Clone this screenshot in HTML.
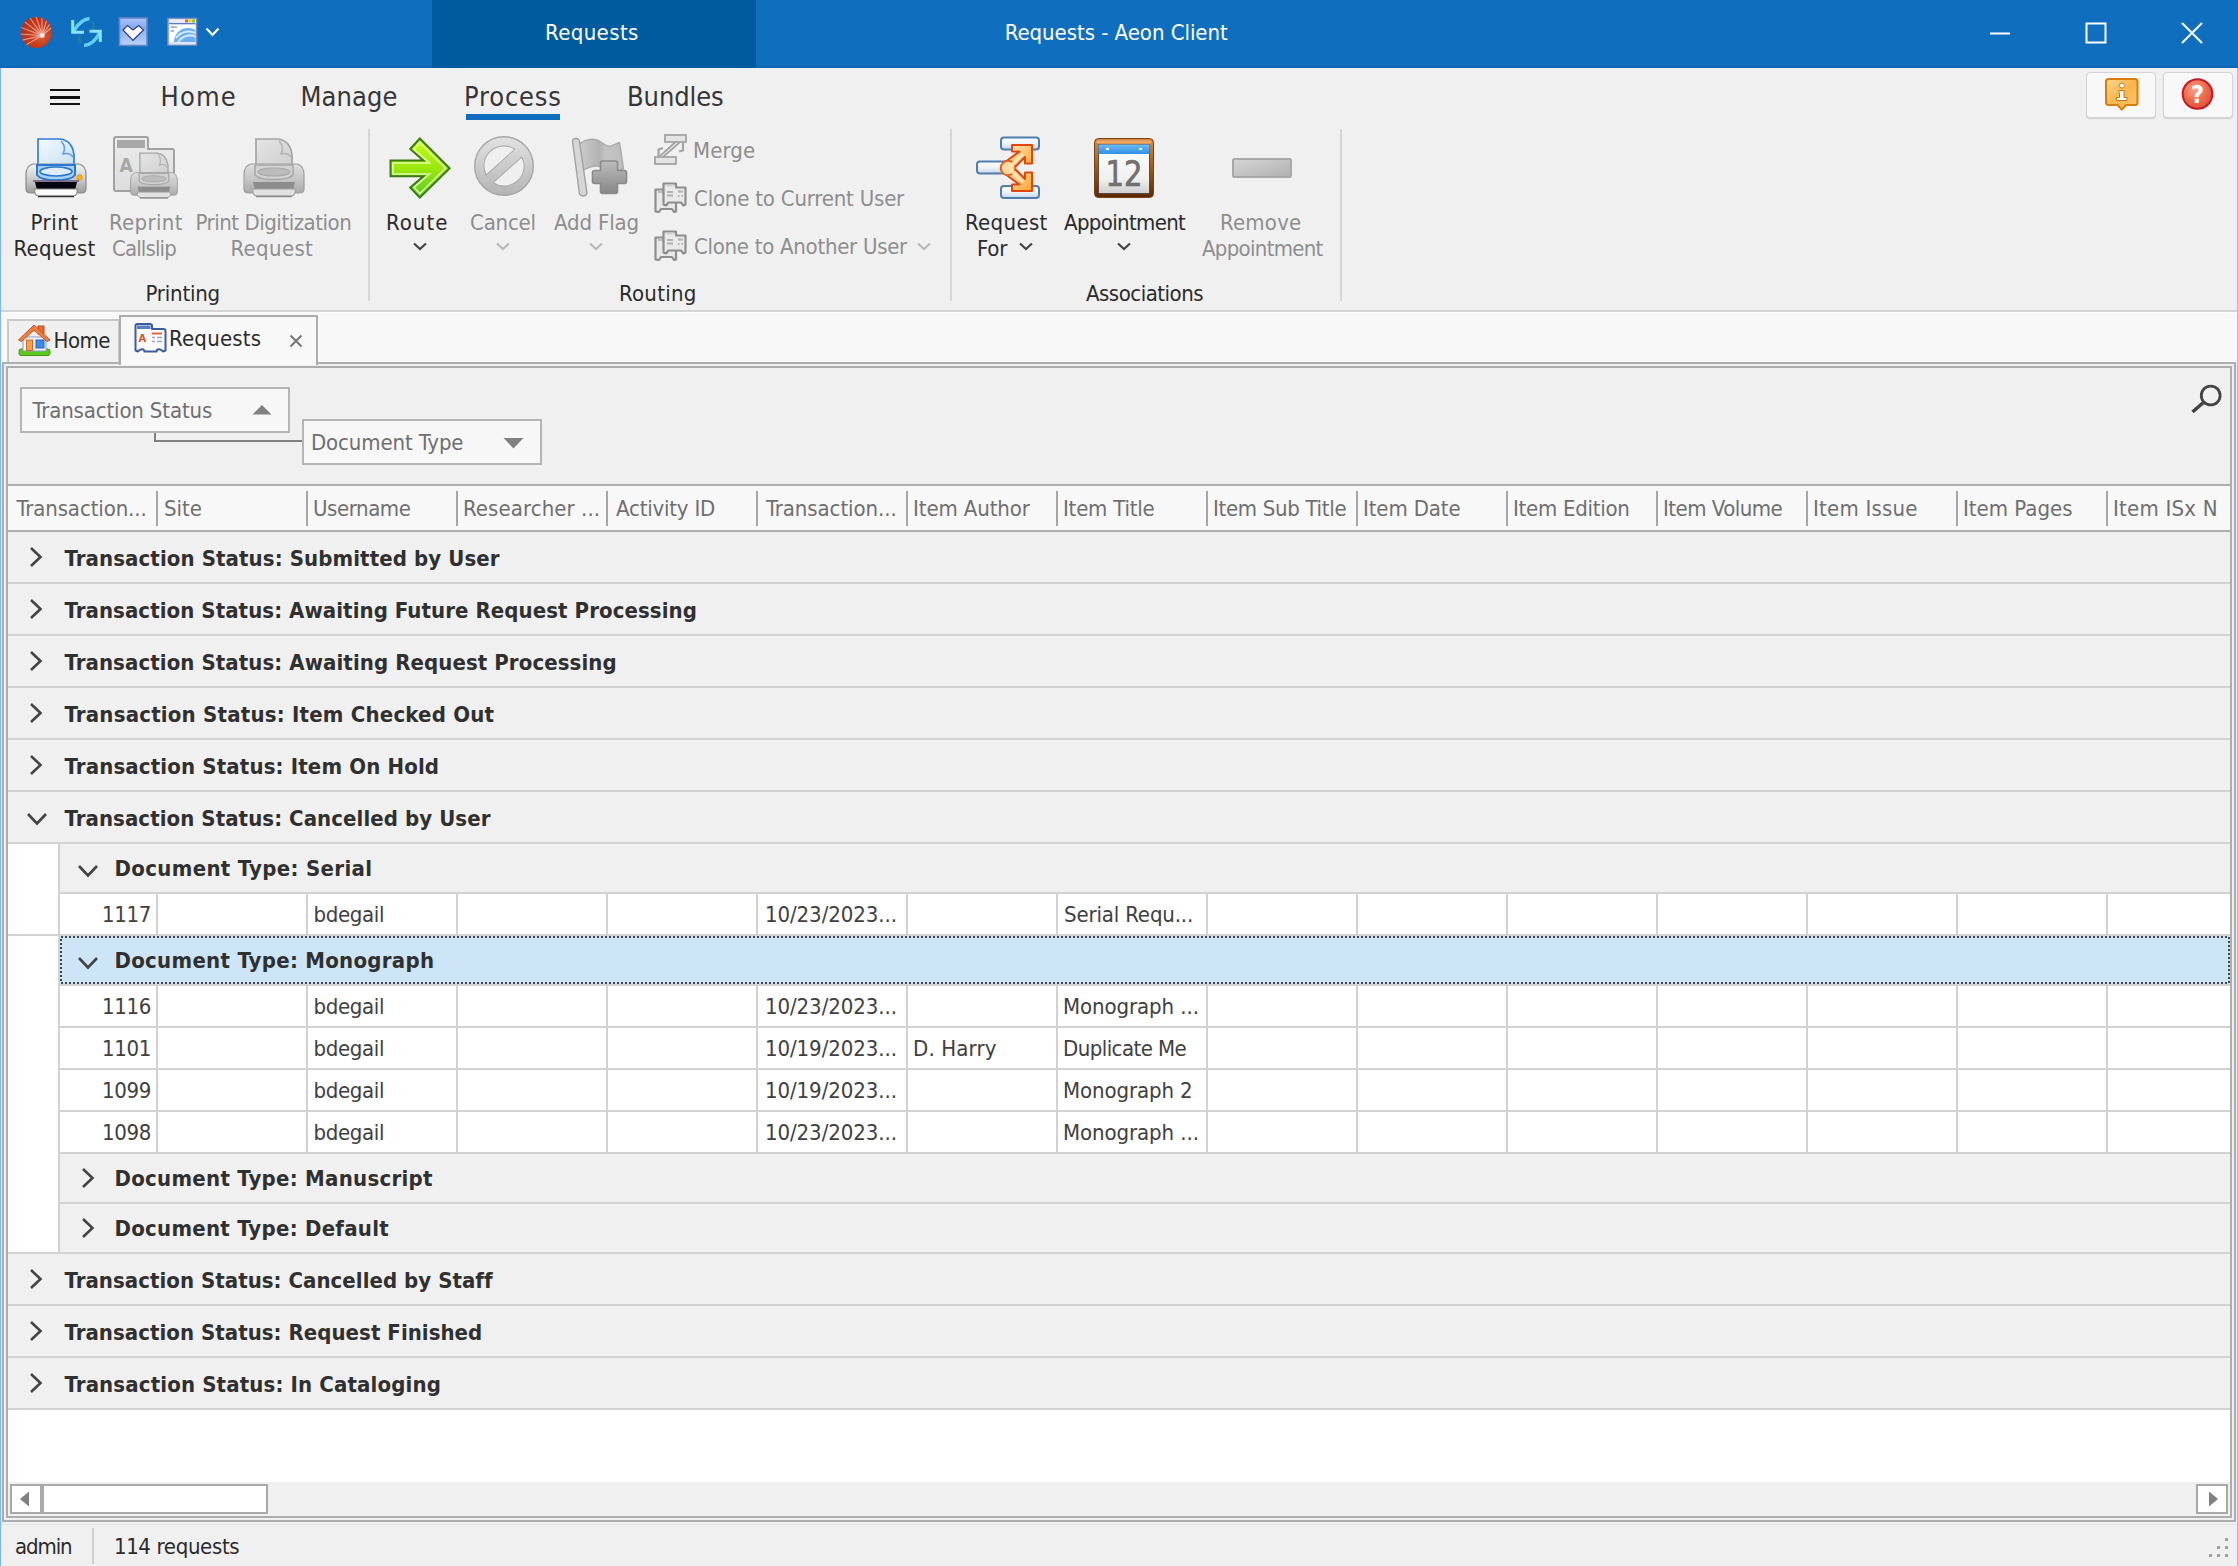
<!DOCTYPE html>
<html lang="en"><head><meta charset="utf-8"><title>Requests - Aeon Client</title>
<style>
html,body{margin:0;padding:0;overflow:hidden;}
body{width:2238px;height:1566px;position:relative;overflow:hidden;background:#f0f0f0;font-family:"DejaVu Sans Condensed","Liberation Sans",sans-serif;}
.b{position:absolute;box-sizing:border-box;}
.t{position:absolute;white-space:nowrap;line-height:1;}
</style></head>
<body>
<div class="b " style="left:0px;top:0px;width:2238px;height:68px;background:#106ebe;"></div>
<div class="b " style="left:432px;top:0px;width:324px;height:68px;background:#005a9e;"></div>
<div class="b " style="left:0px;top:66px;width:2238px;height:2px;background:#0f66b3;"></div>
<div class="b " style="left:432px;top:66px;width:324px;height:2px;background:#005a9e;"></div>
<div class="t" style="left:545px;top:22px;font-size:22px;color:#fff;letter-spacing:0.39px;">Requests</div>
<div class="t" style="left:1004.7px;top:22px;font-size:22px;color:#fff;letter-spacing:-0.04px;">Requests - Aeon Client</div>
<svg class="b" style="left:1980px;top:14px" width="240" height="40" viewBox="0 0 240 40"><g stroke="#fff" stroke-width="2" fill="none"><path d="M10 19.5H30"/><rect x="106.5" y="9.5" width="19" height="19"/><path d="M202 9L222 29M222 9L202 29"/></g></svg>
<div class="b " style="left:0px;top:68px;width:1px;height:1498px;background:#86b6e6;"></div>
<div class="b " style="left:2237px;top:68px;width:1px;height:1498px;background:#9cc2ea;"></div>
<div class="b " style="left:50px;top:89px;width:30px;height:2px;background:#111;"></div>
<div class="b " style="left:50px;top:96px;width:30px;height:3px;background:#111;"></div>
<div class="b " style="left:50px;top:103px;width:30px;height:2px;background:#111;"></div>
<div class="t" style="left:160.5px;top:83px;font-size:27px;color:#363636;letter-spacing:1.17px;">Home</div>
<div class="t" style="left:300.5px;top:83px;font-size:27px;color:#363636;letter-spacing:0.10px;">Manage</div>
<div class="t" style="left:464px;top:83px;font-size:27px;color:#363636;letter-spacing:0.83px;">Process</div>
<div class="t" style="left:627px;top:83px;font-size:27px;color:#363636;letter-spacing:-0.08px;">Bundles</div>
<div class="b " style="left:466px;top:114px;width:94px;height:6px;background:#106ebe;"></div>
<div class="b " style="left:368px;top:129px;width:2px;height:172px;background:#d6d6d6;"></div>
<div class="b " style="left:950px;top:129px;width:2px;height:172px;background:#d6d6d6;"></div>
<div class="b " style="left:1340px;top:129px;width:2px;height:172px;background:#d6d6d6;"></div>
<div class="t" style="left:30.5px;top:212px;font-size:22px;color:#2b2b2b;letter-spacing:0.50px;">Print</div>
<div class="t" style="left:13.5px;top:238px;font-size:22px;color:#2b2b2b;letter-spacing:0.25px;">Request</div>
<div class="t" style="left:109px;top:212px;font-size:22px;color:#8e8e8e;letter-spacing:0.33px;">Reprint</div>
<div class="t" style="left:112px;top:238px;font-size:22px;color:#8e8e8e;letter-spacing:-0.86px;">Callslip</div>
<div class="t" style="left:195.5px;top:212px;font-size:22px;color:#8e8e8e;letter-spacing:-0.47px;">Print Digitization</div>
<div class="t" style="left:230.5px;top:238px;font-size:22px;color:#8e8e8e;letter-spacing:0.33px;">Request</div>
<div class="t" style="left:386px;top:212px;font-size:22px;color:#2b2b2b;letter-spacing:1.00px;">Route</div>
<svg class="b" style="left:412px;top:241px" width="16" height="11" viewBox="0 0 16 11"><path d="M2 2.5L8.0 8L14 2.5" fill="none" stroke="#444" stroke-width="2.2"/></svg>
<div class="t" style="left:470px;top:212px;font-size:22px;color:#8e8e8e;letter-spacing:-0.20px;">Cancel</div>
<svg class="b" style="left:495px;top:241px" width="16" height="11" viewBox="0 0 16 11"><path d="M2 2.5L8.0 8L14 2.5" fill="none" stroke="#b9b9b9" stroke-width="2.2"/></svg>
<div class="t" style="left:554px;top:212px;font-size:22px;color:#8e8e8e;letter-spacing:-0.14px;">Add Flag</div>
<svg class="b" style="left:588px;top:241px" width="16" height="11" viewBox="0 0 16 11"><path d="M2 2.5L8.0 8L14 2.5" fill="none" stroke="#b9b9b9" stroke-width="2.2"/></svg>
<div class="t" style="left:693px;top:140px;font-size:22px;color:#8e8e8e;letter-spacing:0.12px;">Merge</div>
<div class="t" style="left:694px;top:188px;font-size:22px;color:#8e8e8e;letter-spacing:-0.20px;">Clone to Current User</div>
<div class="t" style="left:694px;top:236px;font-size:22px;color:#8e8e8e;letter-spacing:-0.28px;">Clone to Another User</div>
<svg class="b" style="left:916px;top:241px" width="16" height="11" viewBox="0 0 16 11"><path d="M2 2.5L8.0 8L14 2.5" fill="none" stroke="#b9b9b9" stroke-width="2.2"/></svg>
<div class="t" style="left:965px;top:212px;font-size:22px;color:#2b2b2b;letter-spacing:0.33px;">Request</div>
<div class="t" style="left:977px;top:238px;font-size:22px;color:#2b2b2b;letter-spacing:-0.25px;">For</div>
<svg class="b" style="left:1018px;top:241px" width="16" height="11" viewBox="0 0 16 11"><path d="M2 2.5L8.0 8L14 2.5" fill="none" stroke="#444" stroke-width="2.2"/></svg>
<div class="t" style="left:1064px;top:212px;font-size:22px;color:#2b2b2b;letter-spacing:-0.65px;">Appointment</div>
<svg class="b" style="left:1116px;top:241px" width="16" height="11" viewBox="0 0 16 11"><path d="M2 2.5L8.0 8L14 2.5" fill="none" stroke="#444" stroke-width="2.2"/></svg>
<div class="t" style="left:1220px;top:212px;font-size:22px;color:#8e8e8e;letter-spacing:0.20px;">Remove</div>
<div class="t" style="left:1202px;top:238px;font-size:22px;color:#8e8e8e;letter-spacing:-0.70px;">Appointment</div>
<div class="t" style="left:145.5px;top:283px;font-size:22px;color:#2b2b2b;letter-spacing:-0.21px;">Printing</div>
<div class="t" style="left:619px;top:283px;font-size:22px;color:#2b2b2b;letter-spacing:0.25px;">Routing</div>
<div class="t" style="left:1086px;top:283px;font-size:22px;color:#2b2b2b;letter-spacing:-0.50px;">Associations</div>
<div class="b " style="left:2086px;top:72px;width:70px;height:46px;background:#f8f8f8;border:1px solid #d4d4d4;border-radius:4px;box-shadow:0 1px 1px #cfcfcf;"></div>
<div class="b " style="left:2163px;top:72px;width:70px;height:46px;background:#f8f8f8;border:1px solid #d4d4d4;border-radius:4px;box-shadow:0 1px 1px #cfcfcf;"></div>
<div class="b " style="left:1px;top:310px;width:2236px;height:2px;background:#d4d4d4;"></div>
<div class="b " style="left:1px;top:312px;width:2236px;height:50px;background:#f8f8f8;"></div>
<div class="b " style="left:1px;top:312px;width:2236px;height:1px;background:#fcfcfc;"></div>
<div class="b " style="left:1px;top:361px;width:2236px;height:1px;background:#fdfdfd;"></div>
<div class="b " style="left:7px;top:319px;width:113px;height:44px;background:#f0f0f0;border:2px solid #c9c9c9;border-bottom:none;"></div>
<div class="t" style="left:53.5px;top:330px;font-size:22px;color:#2b2b2b;letter-spacing:-0.50px;">Home</div>
<div class="b " style="left:2px;top:362px;width:2234px;height:1160px;background:#f0f0f0;border:2px solid #adadad;"></div>
<div class="b " style="left:119px;top:315px;width:199px;height:50px;background:#f8f8f8;border:2px solid #adadad;border-bottom:none;"></div>
<div class="b " style="left:121px;top:362px;width:195px;height:2px;background:#f8f8f8;"></div>
<div class="t" style="left:169px;top:328px;font-size:22px;color:#2b2b2b;letter-spacing:0.21px;">Requests</div>
<svg class="b" style="left:288px;top:333px" width="16" height="16" viewBox="0 0 16 16"><path d="M2.5 2.5L13.5 13.5M13.5 2.5L2.5 13.5" stroke="#777" stroke-width="2" fill="none"/></svg>
<div class="b " style="left:6px;top:366px;width:2226px;height:1152px;background:#fff;border:2px solid #adadad;"></div>
<div class="b " style="left:8px;top:368px;width:2222px;height:116px;background:#f0f0f0;"></div>
<div class="b " style="left:20px;top:387px;width:270px;height:46px;background:#f7f7f7;border:2px solid #b5b5b5;"></div>
<div class="t" style="left:32.5px;top:400px;font-size:22px;color:#6f6f6f;letter-spacing:-0.15px;">Transaction Status</div>
<svg class="b" style="left:252px;top:404px" width="20" height="12" viewBox="0 0 20 12"><path d="M10 1L19.5 10.5H0.5Z" fill="#808080"/></svg>
<div class="b " style="left:154px;top:433px;width:2px;height:9px;background:#808080;"></div>
<div class="b " style="left:154px;top:440px;width:149px;height:2px;background:#808080;"></div>
<div class="b " style="left:302px;top:419px;width:240px;height:46px;background:#f7f7f7;border:2px solid #b5b5b5;"></div>
<div class="t" style="left:311px;top:432px;font-size:22px;color:#6f6f6f;letter-spacing:-0.12px;">Document Type</div>
<svg class="b" style="left:503px;top:437px" width="21" height="12" viewBox="0 0 21 12"><path d="M0.5 1H20.5L10.5 11.5Z" fill="#808080"/></svg>
<svg class="b" style="left:2186px;top:380px" width="40" height="40" viewBox="0 0 40 40"><circle cx="24.700" cy="15.500" r="9.400" fill="none" stroke="#444" stroke-width="2.800"/><path d="M18 22L6.500 32" stroke="#444" stroke-width="3.600"/></svg>
<div class="b " style="left:8px;top:484px;width:2222px;height:2px;background:#adadad;"></div>
<div class="b " style="left:8px;top:486px;width:2222px;height:44px;background:#f8f8f8;"></div>
<div class="b " style="left:8px;top:530px;width:2222px;height:2px;background:#adadad;"></div>
<div class="t" style="left:16.5px;top:498px;font-size:22px;color:#6f6f6f;letter-spacing:-0.12px;">Transaction...</div>
<div class="t" style="left:164px;top:498px;font-size:22px;color:#6f6f6f;">Site</div>
<div class="t" style="left:313px;top:498px;font-size:22px;color:#6f6f6f;letter-spacing:-0.43px;">Username</div>
<div class="t" style="left:463px;top:498px;font-size:22px;color:#6f6f6f;letter-spacing:0.08px;">Researcher ...</div>
<div class="t" style="left:616px;top:498px;font-size:22px;color:#6f6f6f;letter-spacing:-0.20px;">Activity ID</div>
<div class="t" style="left:766px;top:498px;font-size:22px;color:#6f6f6f;letter-spacing:-0.08px;">Transaction...</div>
<div class="t" style="left:913px;top:498px;font-size:22px;color:#6f6f6f;letter-spacing:-0.10px;">Item Author</div>
<div class="t" style="left:1063px;top:498px;font-size:22px;color:#6f6f6f;letter-spacing:-0.22px;">Item Title</div>
<div class="t" style="left:1213px;top:498px;font-size:22px;color:#6f6f6f;letter-spacing:-0.31px;">Item Sub Title</div>
<div class="t" style="left:1363px;top:498px;font-size:22px;color:#6f6f6f;letter-spacing:-0.12px;">Item Date</div>
<div class="t" style="left:1513px;top:498px;font-size:22px;color:#6f6f6f;letter-spacing:-0.27px;">Item Edition</div>
<div class="t" style="left:1663px;top:498px;font-size:22px;color:#6f6f6f;letter-spacing:-0.50px;">Item Volume</div>
<div class="t" style="left:1813px;top:498px;font-size:22px;color:#6f6f6f;letter-spacing:0.22px;">Item Issue</div>
<div class="t" style="left:1963px;top:498px;font-size:22px;color:#6f6f6f;">Item Pages</div>
<div class="t" style="left:2113px;top:498px;font-size:22px;color:#6f6f6f;letter-spacing:0.22px;">Item ISx N</div>
<div class="b " style="left:156px;top:491px;width:2px;height:35px;background:#a6a6a6;"></div>
<div class="b " style="left:306px;top:491px;width:2px;height:35px;background:#a6a6a6;"></div>
<div class="b " style="left:456px;top:491px;width:2px;height:35px;background:#a6a6a6;"></div>
<div class="b " style="left:606px;top:491px;width:2px;height:35px;background:#a6a6a6;"></div>
<div class="b " style="left:756px;top:491px;width:2px;height:35px;background:#a6a6a6;"></div>
<div class="b " style="left:906px;top:491px;width:2px;height:35px;background:#a6a6a6;"></div>
<div class="b " style="left:1056px;top:491px;width:2px;height:35px;background:#a6a6a6;"></div>
<div class="b " style="left:1206px;top:491px;width:2px;height:35px;background:#a6a6a6;"></div>
<div class="b " style="left:1356px;top:491px;width:2px;height:35px;background:#a6a6a6;"></div>
<div class="b " style="left:1506px;top:491px;width:2px;height:35px;background:#a6a6a6;"></div>
<div class="b " style="left:1656px;top:491px;width:2px;height:35px;background:#a6a6a6;"></div>
<div class="b " style="left:1806px;top:491px;width:2px;height:35px;background:#a6a6a6;"></div>
<div class="b " style="left:1956px;top:491px;width:2px;height:35px;background:#a6a6a6;"></div>
<div class="b " style="left:2106px;top:491px;width:2px;height:35px;background:#a6a6a6;"></div>
<div class="b " style="left:8px;top:532px;width:2222px;height:50px;background:#f0f0f0;"></div>
<div class="b " style="left:8px;top:582px;width:2222px;height:2px;background:#d2d2d2;"></div>
<svg class="b" style="left:28px;top:545px" width="17" height="24" viewBox="0 0 17 24"><path d="M3 3L12.5 12L3 21" fill="none" stroke="#444" stroke-width="2.6"/></svg>
<div class="t" style="left:64.5px;top:548px;font-size:22px;color:#303030;font-weight:bold;letter-spacing:0.10px;">Transaction Status: Submitted by User</div>
<div class="b " style="left:8px;top:584px;width:2222px;height:50px;background:#f0f0f0;"></div>
<div class="b " style="left:8px;top:634px;width:2222px;height:2px;background:#d2d2d2;"></div>
<svg class="b" style="left:28px;top:597px" width="17" height="24" viewBox="0 0 17 24"><path d="M3 3L12.5 12L3 21" fill="none" stroke="#444" stroke-width="2.6"/></svg>
<div class="t" style="left:64.5px;top:600px;font-size:22px;color:#303030;font-weight:bold;letter-spacing:0.07px;">Transaction Status: Awaiting Future Request Processing</div>
<div class="b " style="left:8px;top:636px;width:2222px;height:50px;background:#f0f0f0;"></div>
<div class="b " style="left:8px;top:686px;width:2222px;height:2px;background:#d2d2d2;"></div>
<svg class="b" style="left:28px;top:649px" width="17" height="24" viewBox="0 0 17 24"><path d="M3 3L12.5 12L3 21" fill="none" stroke="#444" stroke-width="2.6"/></svg>
<div class="t" style="left:64.5px;top:652px;font-size:22px;color:#303030;font-weight:bold;letter-spacing:0.08px;">Transaction Status: Awaiting Request Processing</div>
<div class="b " style="left:8px;top:688px;width:2222px;height:50px;background:#f0f0f0;"></div>
<div class="b " style="left:8px;top:738px;width:2222px;height:2px;background:#d2d2d2;"></div>
<svg class="b" style="left:28px;top:701px" width="17" height="24" viewBox="0 0 17 24"><path d="M3 3L12.5 12L3 21" fill="none" stroke="#444" stroke-width="2.6"/></svg>
<div class="t" style="left:64.5px;top:704px;font-size:22px;color:#303030;font-weight:bold;letter-spacing:0.21px;">Transaction Status: Item Checked Out</div>
<div class="b " style="left:8px;top:740px;width:2222px;height:50px;background:#f0f0f0;"></div>
<div class="b " style="left:8px;top:790px;width:2222px;height:2px;background:#d2d2d2;"></div>
<svg class="b" style="left:28px;top:753px" width="17" height="24" viewBox="0 0 17 24"><path d="M3 3L12.5 12L3 21" fill="none" stroke="#444" stroke-width="2.6"/></svg>
<div class="t" style="left:64.5px;top:756px;font-size:22px;color:#303030;font-weight:bold;letter-spacing:0.15px;">Transaction Status: Item On Hold</div>
<div class="b " style="left:8px;top:792px;width:2222px;height:50px;background:#f0f0f0;"></div>
<div class="b " style="left:8px;top:842px;width:2222px;height:2px;background:#d2d2d2;"></div>
<svg class="b" style="left:25px;top:811px" width="24" height="17" viewBox="0 0 24 17"><path d="M3 3L12 12.5L21 3" fill="none" stroke="#444" stroke-width="2.6"/></svg>
<div class="t" style="left:64.5px;top:808px;font-size:22px;color:#303030;font-weight:bold;letter-spacing:0.07px;">Transaction Status: Cancelled by User</div>
<div class="b " style="left:58px;top:844px;width:2px;height:50px;background:#d2d2d2;"></div>
<div class="b " style="left:60px;top:844px;width:2170px;height:48px;background:#f0f0f0;"></div>
<div class="b " style="left:58px;top:892px;width:2172px;height:2px;background:#d2d2d2;"></div>
<svg class="b" style="left:76px;top:863px" width="24" height="17" viewBox="0 0 24 17"><path d="M3 3L12 12.5L21 3" fill="none" stroke="#444" stroke-width="2.6"/></svg>
<div class="t" style="left:114.5px;top:858px;font-size:22px;color:#303030;font-weight:bold;letter-spacing:0.33px;">Document Type: Serial</div>
<div class="b " style="left:58px;top:894px;width:2px;height:42px;background:#d2d2d2;"></div>
<div class="b " style="left:8px;top:934px;width:2222px;height:2px;background:#d2d2d2;"></div>
<div class="b " style="left:156px;top:894px;width:2px;height:40px;background:#d2d2d2;"></div>
<div class="b " style="left:306px;top:894px;width:2px;height:40px;background:#d2d2d2;"></div>
<div class="b " style="left:456px;top:894px;width:2px;height:40px;background:#d2d2d2;"></div>
<div class="b " style="left:606px;top:894px;width:2px;height:40px;background:#d2d2d2;"></div>
<div class="b " style="left:756px;top:894px;width:2px;height:40px;background:#d2d2d2;"></div>
<div class="b " style="left:906px;top:894px;width:2px;height:40px;background:#d2d2d2;"></div>
<div class="b " style="left:1056px;top:894px;width:2px;height:40px;background:#d2d2d2;"></div>
<div class="b " style="left:1206px;top:894px;width:2px;height:40px;background:#d2d2d2;"></div>
<div class="b " style="left:1356px;top:894px;width:2px;height:40px;background:#d2d2d2;"></div>
<div class="b " style="left:1506px;top:894px;width:2px;height:40px;background:#d2d2d2;"></div>
<div class="b " style="left:1656px;top:894px;width:2px;height:40px;background:#d2d2d2;"></div>
<div class="b " style="left:1806px;top:894px;width:2px;height:40px;background:#d2d2d2;"></div>
<div class="b " style="left:1956px;top:894px;width:2px;height:40px;background:#d2d2d2;"></div>
<div class="b " style="left:2106px;top:894px;width:2px;height:40px;background:#d2d2d2;"></div>
<div class="t" style="left:102px;top:904px;font-size:22px;color:#404040;letter-spacing:-0.33px;">1117</div>
<div class="t" style="left:313.5px;top:904px;font-size:22px;color:#404040;letter-spacing:-0.33px;">bdegail</div>
<div class="t" style="left:765px;top:904px;font-size:22px;color:#404040;letter-spacing:-0.08px;">10/23/2023...</div>
<div class="t" style="left:1064px;top:904px;font-size:22px;color:#404040;letter-spacing:-0.15px;">Serial Requ...</div>
<div class="b " style="left:58px;top:936px;width:2px;height:50px;background:#d2d2d2;"></div>
<div class="b " style="left:60px;top:936px;width:2170px;height:48px;background:#cde6f7;"></div>
<div class="b " style="left:58px;top:984px;width:2172px;height:2px;background:#d2d2d2;"></div>
<svg class="b" style="left:60px;top:936px" width="2170" height="48"><rect x="1" y="1" width="2168" height="46" fill="none" stroke="#444" stroke-width="2" stroke-dasharray="2 2"/></svg>
<svg class="b" style="left:76px;top:955px" width="24" height="17" viewBox="0 0 24 17"><path d="M3 3L12 12.5L21 3" fill="none" stroke="#444" stroke-width="2.6"/></svg>
<div class="t" style="left:114.5px;top:950px;font-size:22px;color:#303030;font-weight:bold;letter-spacing:0.28px;">Document Type: Monograph</div>
<div class="b " style="left:58px;top:986px;width:2px;height:42px;background:#d2d2d2;"></div>
<div class="b " style="left:58px;top:1026px;width:2172px;height:2px;background:#d2d2d2;"></div>
<div class="b " style="left:156px;top:986px;width:2px;height:40px;background:#d2d2d2;"></div>
<div class="b " style="left:306px;top:986px;width:2px;height:40px;background:#d2d2d2;"></div>
<div class="b " style="left:456px;top:986px;width:2px;height:40px;background:#d2d2d2;"></div>
<div class="b " style="left:606px;top:986px;width:2px;height:40px;background:#d2d2d2;"></div>
<div class="b " style="left:756px;top:986px;width:2px;height:40px;background:#d2d2d2;"></div>
<div class="b " style="left:906px;top:986px;width:2px;height:40px;background:#d2d2d2;"></div>
<div class="b " style="left:1056px;top:986px;width:2px;height:40px;background:#d2d2d2;"></div>
<div class="b " style="left:1206px;top:986px;width:2px;height:40px;background:#d2d2d2;"></div>
<div class="b " style="left:1356px;top:986px;width:2px;height:40px;background:#d2d2d2;"></div>
<div class="b " style="left:1506px;top:986px;width:2px;height:40px;background:#d2d2d2;"></div>
<div class="b " style="left:1656px;top:986px;width:2px;height:40px;background:#d2d2d2;"></div>
<div class="b " style="left:1806px;top:986px;width:2px;height:40px;background:#d2d2d2;"></div>
<div class="b " style="left:1956px;top:986px;width:2px;height:40px;background:#d2d2d2;"></div>
<div class="b " style="left:2106px;top:986px;width:2px;height:40px;background:#d2d2d2;"></div>
<div class="t" style="left:102px;top:996px;font-size:22px;color:#404040;letter-spacing:-0.33px;">1116</div>
<div class="t" style="left:313.5px;top:996px;font-size:22px;color:#404040;letter-spacing:-0.33px;">bdegail</div>
<div class="t" style="left:765px;top:996px;font-size:22px;color:#404040;letter-spacing:-0.08px;">10/23/2023...</div>
<div class="t" style="left:1063px;top:996px;font-size:22px;color:#404040;letter-spacing:-0.08px;">Monograph ...</div>
<div class="b " style="left:58px;top:1028px;width:2px;height:42px;background:#d2d2d2;"></div>
<div class="b " style="left:58px;top:1068px;width:2172px;height:2px;background:#d2d2d2;"></div>
<div class="b " style="left:156px;top:1028px;width:2px;height:40px;background:#d2d2d2;"></div>
<div class="b " style="left:306px;top:1028px;width:2px;height:40px;background:#d2d2d2;"></div>
<div class="b " style="left:456px;top:1028px;width:2px;height:40px;background:#d2d2d2;"></div>
<div class="b " style="left:606px;top:1028px;width:2px;height:40px;background:#d2d2d2;"></div>
<div class="b " style="left:756px;top:1028px;width:2px;height:40px;background:#d2d2d2;"></div>
<div class="b " style="left:906px;top:1028px;width:2px;height:40px;background:#d2d2d2;"></div>
<div class="b " style="left:1056px;top:1028px;width:2px;height:40px;background:#d2d2d2;"></div>
<div class="b " style="left:1206px;top:1028px;width:2px;height:40px;background:#d2d2d2;"></div>
<div class="b " style="left:1356px;top:1028px;width:2px;height:40px;background:#d2d2d2;"></div>
<div class="b " style="left:1506px;top:1028px;width:2px;height:40px;background:#d2d2d2;"></div>
<div class="b " style="left:1656px;top:1028px;width:2px;height:40px;background:#d2d2d2;"></div>
<div class="b " style="left:1806px;top:1028px;width:2px;height:40px;background:#d2d2d2;"></div>
<div class="b " style="left:1956px;top:1028px;width:2px;height:40px;background:#d2d2d2;"></div>
<div class="b " style="left:2106px;top:1028px;width:2px;height:40px;background:#d2d2d2;"></div>
<div class="t" style="left:102px;top:1038px;font-size:22px;color:#404040;letter-spacing:-0.33px;">1101</div>
<div class="t" style="left:313.5px;top:1038px;font-size:22px;color:#404040;letter-spacing:-0.33px;">bdegail</div>
<div class="t" style="left:765px;top:1038px;font-size:22px;color:#404040;letter-spacing:-0.08px;">10/19/2023...</div>
<div class="t" style="left:913px;top:1038px;font-size:22px;color:#404040;letter-spacing:0.14px;">D. Harry</div>
<div class="t" style="left:1063px;top:1038px;font-size:22px;color:#404040;letter-spacing:-0.55px;">Duplicate Me</div>
<div class="b " style="left:58px;top:1070px;width:2px;height:42px;background:#d2d2d2;"></div>
<div class="b " style="left:58px;top:1110px;width:2172px;height:2px;background:#d2d2d2;"></div>
<div class="b " style="left:156px;top:1070px;width:2px;height:40px;background:#d2d2d2;"></div>
<div class="b " style="left:306px;top:1070px;width:2px;height:40px;background:#d2d2d2;"></div>
<div class="b " style="left:456px;top:1070px;width:2px;height:40px;background:#d2d2d2;"></div>
<div class="b " style="left:606px;top:1070px;width:2px;height:40px;background:#d2d2d2;"></div>
<div class="b " style="left:756px;top:1070px;width:2px;height:40px;background:#d2d2d2;"></div>
<div class="b " style="left:906px;top:1070px;width:2px;height:40px;background:#d2d2d2;"></div>
<div class="b " style="left:1056px;top:1070px;width:2px;height:40px;background:#d2d2d2;"></div>
<div class="b " style="left:1206px;top:1070px;width:2px;height:40px;background:#d2d2d2;"></div>
<div class="b " style="left:1356px;top:1070px;width:2px;height:40px;background:#d2d2d2;"></div>
<div class="b " style="left:1506px;top:1070px;width:2px;height:40px;background:#d2d2d2;"></div>
<div class="b " style="left:1656px;top:1070px;width:2px;height:40px;background:#d2d2d2;"></div>
<div class="b " style="left:1806px;top:1070px;width:2px;height:40px;background:#d2d2d2;"></div>
<div class="b " style="left:1956px;top:1070px;width:2px;height:40px;background:#d2d2d2;"></div>
<div class="b " style="left:2106px;top:1070px;width:2px;height:40px;background:#d2d2d2;"></div>
<div class="t" style="left:102px;top:1080px;font-size:22px;color:#404040;letter-spacing:-0.33px;">1099</div>
<div class="t" style="left:313.5px;top:1080px;font-size:22px;color:#404040;letter-spacing:-0.33px;">bdegail</div>
<div class="t" style="left:765px;top:1080px;font-size:22px;color:#404040;letter-spacing:-0.08px;">10/19/2023...</div>
<div class="t" style="left:1063px;top:1080px;font-size:22px;color:#404040;letter-spacing:-0.10px;">Monograph 2</div>
<div class="b " style="left:58px;top:1112px;width:2px;height:42px;background:#d2d2d2;"></div>
<div class="b " style="left:58px;top:1152px;width:2172px;height:2px;background:#d2d2d2;"></div>
<div class="b " style="left:156px;top:1112px;width:2px;height:40px;background:#d2d2d2;"></div>
<div class="b " style="left:306px;top:1112px;width:2px;height:40px;background:#d2d2d2;"></div>
<div class="b " style="left:456px;top:1112px;width:2px;height:40px;background:#d2d2d2;"></div>
<div class="b " style="left:606px;top:1112px;width:2px;height:40px;background:#d2d2d2;"></div>
<div class="b " style="left:756px;top:1112px;width:2px;height:40px;background:#d2d2d2;"></div>
<div class="b " style="left:906px;top:1112px;width:2px;height:40px;background:#d2d2d2;"></div>
<div class="b " style="left:1056px;top:1112px;width:2px;height:40px;background:#d2d2d2;"></div>
<div class="b " style="left:1206px;top:1112px;width:2px;height:40px;background:#d2d2d2;"></div>
<div class="b " style="left:1356px;top:1112px;width:2px;height:40px;background:#d2d2d2;"></div>
<div class="b " style="left:1506px;top:1112px;width:2px;height:40px;background:#d2d2d2;"></div>
<div class="b " style="left:1656px;top:1112px;width:2px;height:40px;background:#d2d2d2;"></div>
<div class="b " style="left:1806px;top:1112px;width:2px;height:40px;background:#d2d2d2;"></div>
<div class="b " style="left:1956px;top:1112px;width:2px;height:40px;background:#d2d2d2;"></div>
<div class="b " style="left:2106px;top:1112px;width:2px;height:40px;background:#d2d2d2;"></div>
<div class="t" style="left:102px;top:1122px;font-size:22px;color:#404040;letter-spacing:-0.33px;">1098</div>
<div class="t" style="left:313.5px;top:1122px;font-size:22px;color:#404040;letter-spacing:-0.33px;">bdegail</div>
<div class="t" style="left:765px;top:1122px;font-size:22px;color:#404040;letter-spacing:-0.08px;">10/23/2023...</div>
<div class="t" style="left:1063px;top:1122px;font-size:22px;color:#404040;letter-spacing:-0.08px;">Monograph ...</div>
<div class="b " style="left:58px;top:1154px;width:2px;height:50px;background:#d2d2d2;"></div>
<div class="b " style="left:60px;top:1154px;width:2170px;height:48px;background:#f0f0f0;"></div>
<div class="b " style="left:58px;top:1202px;width:2172px;height:2px;background:#d2d2d2;"></div>
<svg class="b" style="left:80px;top:1166px" width="17" height="24" viewBox="0 0 17 24"><path d="M3 3L12.5 12L3 21" fill="none" stroke="#444" stroke-width="2.6"/></svg>
<div class="t" style="left:114.5px;top:1168px;font-size:22px;color:#303030;font-weight:bold;letter-spacing:0.27px;">Document Type: Manuscript</div>
<div class="b " style="left:58px;top:1204px;width:2px;height:50px;background:#d2d2d2;"></div>
<div class="b " style="left:60px;top:1204px;width:2170px;height:48px;background:#f0f0f0;"></div>
<div class="b " style="left:8px;top:1252px;width:2222px;height:2px;background:#d2d2d2;"></div>
<svg class="b" style="left:80px;top:1216px" width="17" height="24" viewBox="0 0 17 24"><path d="M3 3L12.5 12L3 21" fill="none" stroke="#444" stroke-width="2.6"/></svg>
<div class="t" style="left:114.5px;top:1218px;font-size:22px;color:#303030;font-weight:bold;letter-spacing:0.26px;">Document Type: Default</div>
<div class="b " style="left:8px;top:1254px;width:2222px;height:50px;background:#f0f0f0;"></div>
<div class="b " style="left:8px;top:1304px;width:2222px;height:2px;background:#d2d2d2;"></div>
<svg class="b" style="left:28px;top:1267px" width="17" height="24" viewBox="0 0 17 24"><path d="M3 3L12.5 12L3 21" fill="none" stroke="#444" stroke-width="2.6"/></svg>
<div class="t" style="left:64.5px;top:1270px;font-size:22px;color:#303030;font-weight:bold;letter-spacing:0.04px;">Transaction Status: Cancelled by Staff</div>
<div class="b " style="left:8px;top:1306px;width:2222px;height:50px;background:#f0f0f0;"></div>
<div class="b " style="left:8px;top:1356px;width:2222px;height:2px;background:#d2d2d2;"></div>
<svg class="b" style="left:28px;top:1319px" width="17" height="24" viewBox="0 0 17 24"><path d="M3 3L12.5 12L3 21" fill="none" stroke="#444" stroke-width="2.6"/></svg>
<div class="t" style="left:64.5px;top:1322px;font-size:22px;color:#303030;font-weight:bold;letter-spacing:0.04px;">Transaction Status: Request Finished</div>
<div class="b " style="left:8px;top:1358px;width:2222px;height:50px;background:#f0f0f0;"></div>
<div class="b " style="left:8px;top:1408px;width:2222px;height:2px;background:#d2d2d2;"></div>
<svg class="b" style="left:28px;top:1371px" width="17" height="24" viewBox="0 0 17 24"><path d="M3 3L12.5 12L3 21" fill="none" stroke="#444" stroke-width="2.6"/></svg>
<div class="t" style="left:64.5px;top:1374px;font-size:22px;color:#303030;font-weight:bold;letter-spacing:0.14px;">Transaction Status: In Cataloging</div>
<div class="b " style="left:8px;top:1482px;width:2222px;height:34px;background:#f0f0f0;"></div>
<div class="b " style="left:10px;top:1484px;width:32px;height:30px;background:#fff;border:2px solid #a9a9a9;"></div>
<svg class="b" style="left:18px;top:1490px" width="14" height="18" viewBox="0 0 14 18"><path d="M11 1.5V16.5L2 9Z" fill="#808080"/></svg>
<div class="b " style="left:42px;top:1484px;width:226px;height:30px;background:#fff;border:2px solid #a9a9a9;"></div>
<div class="b " style="left:2196px;top:1484px;width:32px;height:30px;background:#fff;border:2px solid #a9a9a9;"></div>
<svg class="b" style="left:2206px;top:1490px" width="14" height="18" viewBox="0 0 14 18"><path d="M3 1.5V16.5L12 9Z" fill="#808080"/></svg>
<div class="b " style="left:1px;top:1522px;width:2236px;height:44px;background:#f0f0f0;"></div>
<div class="b " style="left:1px;top:1524px;width:2236px;height:1px;background:#e3e3e3;"></div>
<div class="t" style="left:15px;top:1536px;font-size:22px;color:#2b2b2b;letter-spacing:-1.10px;">admin</div>
<div class="b " style="left:92px;top:1528px;width:2px;height:36px;background:#d0d0d0;"></div>
<div class="t" style="left:113.9px;top:1536px;font-size:22px;color:#2b2b2b;letter-spacing:-0.35px;">114 requests</div>
<div class="b " style="left:2225px;top:1538px;width:3px;height:3px;background:#a0a0a0;"></div>
<div class="b " style="left:2225px;top:1546px;width:3px;height:3px;background:#a0a0a0;"></div>
<div class="b " style="left:2217px;top:1546px;width:3px;height:3px;background:#a0a0a0;"></div>
<div class="b " style="left:2225px;top:1554px;width:3px;height:3px;background:#a0a0a0;"></div>
<div class="b " style="left:2217px;top:1554px;width:3px;height:3px;background:#a0a0a0;"></div>
<div class="b " style="left:2209px;top:1554px;width:3px;height:3px;background:#a0a0a0;"></div>
<svg class="b" style="left:0;top:0" width="2238" height="1566" viewBox="0 0 2238 1566"><defs><radialGradient id="apg" cx="0.65" cy="0.6" r="0.7"><stop offset="0" stop-color="#e0603a"/><stop offset="0.5" stop-color="#c63c1c"/><stop offset="1" stop-color="#b52f16"/></radialGradient><linearGradient id="htg" x1="0" y1="0" x2="0" y2="1"><stop offset="0" stop-color="#a6c4f8"/><stop offset="0.35" stop-color="#86acf0"/><stop offset="1" stop-color="#bcd2fb"/></linearGradient><linearGradient id="p1pg" x1="0" y1="0" x2="1" y2="1"><stop offset="0" stop-color="#f4f9fe"/><stop offset="1" stop-color="#c7e0f4"/></linearGradient><linearGradient id="p1bd" x1="0" y1="0" x2="0" y2="1"><stop offset="0" stop-color="#f4f4f4"/><stop offset="0.55" stop-color="#c9c9c9"/><stop offset="1" stop-color="#9c9c9c"/></linearGradient><linearGradient id="rpw" x1="0" y1="0" x2="0" y2="1"><stop offset="0" stop-color="#ececec"/><stop offset="1" stop-color="#dcdcdc"/></linearGradient><linearGradient id="p2pg" x1="0" y1="0" x2="1" y2="1"><stop offset="0" stop-color="#e4e4e4"/><stop offset="1" stop-color="#cfcfcf"/></linearGradient><linearGradient id="p2bd" x1="0" y1="0" x2="0" y2="1"><stop offset="0" stop-color="#dedede"/><stop offset="0.55" stop-color="#c4c4c4"/><stop offset="1" stop-color="#a9a9a9"/></linearGradient><linearGradient id="p3pg" x1="0" y1="0" x2="1" y2="1"><stop offset="0" stop-color="#e4e4e4"/><stop offset="1" stop-color="#cfcfcf"/></linearGradient><linearGradient id="p3bd" x1="0" y1="0" x2="0" y2="1"><stop offset="0" stop-color="#dedede"/><stop offset="0.55" stop-color="#c4c4c4"/><stop offset="1" stop-color="#a9a9a9"/></linearGradient><linearGradient id="rag" x1="0" y1="0" x2="0" y2="1"><stop offset="0" stop-color="#c2ff0a"/><stop offset="0.5" stop-color="#9be80e"/><stop offset="1" stop-color="#55cc1e"/></linearGradient><linearGradient id="cag" x1="0" y1="0" x2="0" y2="1"><stop offset="0" stop-color="#e2e2e2"/><stop offset="1" stop-color="#b4b4b4"/></linearGradient><linearGradient id="flg" x1="0" y1="0" x2="1" y2="0"><stop offset="0" stop-color="#cccccc"/><stop offset="0.45" stop-color="#b2b2b2"/><stop offset="0.6" stop-color="#c4c4c4"/><stop offset="1" stop-color="#bdbdbd"/></linearGradient><linearGradient id="plg" x1="0" y1="0" x2="0" y2="1"><stop offset="0" stop-color="#bdbdbd"/><stop offset="1" stop-color="#878787"/></linearGradient><linearGradient id="rfb" x1="0" y1="0" x2="0" y2="1"><stop offset="0" stop-color="#ffffff"/><stop offset="0.5" stop-color="#eef4fa"/><stop offset="1" stop-color="#c4d6e8"/></linearGradient><linearGradient id="rfo" x1="0" y1="0" x2="1" y2="1"><stop offset="0" stop-color="#fff0c0"/><stop offset="1" stop-color="#ffa030"/></linearGradient><linearGradient id="cbr" x1="0" y1="0" x2="0" y2="1"><stop offset="0" stop-color="#d88a44"/><stop offset="0.5" stop-color="#9a5a20"/><stop offset="1" stop-color="#5a2a06"/></linearGradient><linearGradient id="cpg" x1="0" y1="0" x2="0" y2="1"><stop offset="0" stop-color="#ffffff"/><stop offset="0.7" stop-color="#f0f0f0"/><stop offset="1" stop-color="#cfcfcf"/></linearGradient><linearGradient id="cbl" x1="0" y1="0" x2="0" y2="1"><stop offset="0" stop-color="#6cbcf8"/><stop offset="1" stop-color="#2f8fe4"/></linearGradient><linearGradient id="rmg" x1="0" y1="0" x2="1" y2="1"><stop offset="0" stop-color="#d6d6d6"/><stop offset="1" stop-color="#b0b0b0"/></linearGradient><linearGradient id="ifg" x1="0" y1="0" x2="1" y2="1"><stop offset="0" stop-color="#fbd58a"/><stop offset="0.5" stop-color="#f8b64c"/><stop offset="1" stop-color="#fbc76c"/></linearGradient><radialGradient id="hlg" cx="0.42" cy="0.35" r="0.65"><stop offset="0" stop-color="#fba58a"/><stop offset="0.6" stop-color="#ee6a4c"/><stop offset="1" stop-color="#e2503a"/></radialGradient></defs><circle cx="36.2" cy="32.5" r="15.6" fill="url(#apg)"/><clipPath id="apc"><circle cx="36.2" cy="32.5" r="15.6"/></clipPath><g clip-path="url(#apc)" stroke="#fff" stroke-width="1.1" opacity="0.5"><path d="M42.2 35.5L7.6 55.5"/><path d="M42.2 35.5L3.2 44.5"/><path d="M42.2 35.5L2.3 32.7"/><path d="M42.2 35.5L4.9 21.2"/><path d="M42.2 35.5L10.7 10.9"/><path d="M42.2 35.5L19.3 2.7"/><path d="M42.2 35.5L29.8 -2.5"/><path d="M42.2 35.5L41.5 -4.5"/><path d="M42.2 35.5L53.2 -3.0"/><path d="M42.2 35.5L64.0 2.0"/><path d="M42.2 35.5L72.8 9.8"/></g><circle cx="42.2" cy="35.5" r="2.500" fill="#fff" opacity="0.75"/><g fill="none" stroke-linecap="butt" stroke-linejoin="miter"><path d="M92 21.500C94 24 94 27 93 30" stroke="#1a7fa6" stroke-width="3"/><path d="M81 43C79 40.500 79 37.500 80 35" stroke="#1a7fa6" stroke-width="3"/><path d="M89.500 18.500C84 19 78 24 74 30.500" stroke="#5fd2f8" stroke-width="3.600"/><path d="M84 45.500C90 45 96 40 99.500 33" stroke="#5fd2f8" stroke-width="3.600"/><path d="M72.700 20V32.300H84" stroke="#8be4ff" stroke-width="3"/><path d="M89.500 31.300H100.300V42" stroke="#8be4ff" stroke-width="3"/></g><rect x="119.5" y="18" width="27.5" height="27.5" fill="url(#htg)" stroke="#6a84c4" stroke-width="1.6"/><path d="M123 30L127.5 25.6L133 30L138.7 25.6L143.5 30L133 40.3Z" fill="#fff" stroke="#2a3c90" stroke-width="1.2"/><rect x="168" y="18.5" width="28.500" height="26.5" fill="#fff" stroke="#7c8cc4" stroke-width="1.6"/><rect x="169" y="19.5" width="26.5" height="3.5" fill="#e8ecf8"/><rect x="185" y="19.500" width="3" height="3" fill="#f05a5a"/><rect x="188.5" y="19.5" width="3" height="3" fill="#f0d800"/><rect x="192" y="19.5" width="3" height="3" fill="#7ed321"/><path d="M169 23.700H195.500" stroke="#4a6cc8" stroke-width="1.200"/><path d="M170.500 27H177M170.500 31H174" stroke="#8ea2d8" stroke-width="1.400"/><clipPath id="wic"><rect x="169" y="23.500" width="26.500" height="18.5"/></clipPath><g clip-path="url(#wic)"><circle cx="188" cy="42" r="14" fill="#6aaef6"/><path d="M176 38C181 31 190 30 196 33M178 42C183 35 191 34 196 37" stroke="#d6eaff" stroke-width="2" fill="none"/></g><rect x="169" y="42" width="26.5" height="2.500" fill="#dfe6f6"/><path d="M206.5 28.500L212.500 35L218.500 28.500" fill="none" stroke="#fff" stroke-width="2.200"/><g transform="translate(24,135) scale(1.0)"><path d="M14 4H36C44 5 49 11 50 20V31H14Z" fill="url(#p1pg)" stroke="#2f7fd6" stroke-width="1.7"/><path d="M37 6C41 10 41 15 39 19C43 18 47 19 49 22" fill="none" stroke="#2f7fd6" stroke-width="1.5" opacity="0.7"/><path d="M9 29H55C60 30 62 34 62 40V54C62 57 60 58 57 58H7C4 58 2 57 2 54V40C2 34 4 30 9 29Z" fill="url(#p1bd)" stroke="#8a8a8a" stroke-width="1.2"/><path d="M13 30H51V40C46 47 18 47 13 40Z" fill="#a9cff2" stroke="#2a78d0" stroke-width="2"/><ellipse cx="32" cy="36.5" rx="16" ry="4.5" fill="#dcecf9" stroke="#2a78d0" stroke-width="1.7"/><circle cx="55.500" cy="42.500" r="2.700" fill="#ffb400" stroke="#f08a00" stroke-width="0.8"/><path d="M11 47H53L51 55H13Z" fill="#05050f"/><path d="M9 46H55" stroke="#6a5a78" stroke-width="1.5"/><path d="M11 54H53C54 58 52 61 49 61H15C12 61 10 58 11 54Z" fill="#fafafa" stroke="#8a8a8a" stroke-width="1.2"/><path d="M14 61.5H50" stroke="#333" stroke-width="1.6"/></g><g transform="translate(114,136)"><path d="M2 1H32C33.5 1 34 2 34 3V13H58C59.5 13 60 14 60 15V40H26V45C26 47 22 47 22 50V55H2C0.8 55 0 54 0 53V3C0 2 0.8 1 2 1Z" fill="url(#rpw)" stroke="#a2a2a2" stroke-width="2"/><rect x="3" y="4" width="28" height="8" fill="#a8a8a8"/><text x="5.500" y="35.500" font-family="'DejaVu Sans Condensed','Liberation Sans',sans-serif" font-weight="bold" font-size="19" fill="#a6a6a6">A</text></g><g transform="translate(129,150) scale(0.78)"><path d="M14 4H36C44 5 49 11 50 20V31H14Z" fill="url(#p2pg)" stroke="#a4a4a4" stroke-width="1.7"/><path d="M37 6C41 10 41 15 39 19C43 18 47 19 49 22" fill="none" stroke="#a4a4a4" stroke-width="1.5" opacity="0.7"/><path d="M9 29H55C60 30 62 34 62 40V54C62 57 60 58 57 58H7C4 58 2 57 2 54V40C2 34 4 30 9 29Z" fill="url(#p2bd)" stroke="#a0a0a0" stroke-width="1.2"/><path d="M13 30H51V40C46 46 18 46 13 40Z" fill="#d2d2d2" stroke="#a8a8a8" stroke-width="1.6"/><ellipse cx="32" cy="37" rx="16" ry="4" fill="#bcbcbc" stroke="#a8a8a8" stroke-width="1.2"/><path d="M11 47H53L51 55H13Z" fill="#8c8c8c"/><path d="M11 54H53C54 58 52 61 49 61H15C12 61 10 58 11 54Z" fill="#e2e2e2" stroke="#a0a0a0" stroke-width="1.2"/><path d="M14 61.5H50" stroke="#8a8a8a" stroke-width="1.6"/></g><g transform="translate(242,135) scale(1.0)"><path d="M14 4H36C44 5 49 11 50 20V31H14Z" fill="url(#p3pg)" stroke="#a4a4a4" stroke-width="1.7"/><path d="M37 6C41 10 41 15 39 19C43 18 47 19 49 22" fill="none" stroke="#a4a4a4" stroke-width="1.5" opacity="0.7"/><path d="M9 29H55C60 30 62 34 62 40V54C62 57 60 58 57 58H7C4 58 2 57 2 54V40C2 34 4 30 9 29Z" fill="url(#p3bd)" stroke="#a0a0a0" stroke-width="1.2"/><path d="M13 30H51V40C46 46 18 46 13 40Z" fill="#d2d2d2" stroke="#a8a8a8" stroke-width="1.6"/><ellipse cx="32" cy="37" rx="16" ry="4" fill="#bcbcbc" stroke="#a8a8a8" stroke-width="1.2"/><path d="M11 47H53L51 55H13Z" fill="#8c8c8c"/><path d="M11 54H53C54 58 52 61 49 61H15C12 61 10 58 11 54Z" fill="#e2e2e2" stroke="#a0a0a0" stroke-width="1.2"/><path d="M14 61.5H50" stroke="#8a8a8a" stroke-width="1.6"/></g><polygon points="390.5,160.6 423.4,160.6 410.2,149 419.8,138.5 449.6,168.2 419.8,197.6 410.2,187.6 423.4,176.3 390.5,176.3" fill="url(#rag)" stroke="#3b7a12" stroke-width="2" stroke-linejoin="miter"/><polygon points="393,163 429.5,163 414,149.3 419.8,142.6 445.6,168.2 419.8,193.6 414,187.3 429.5,174 393,174" fill="none" stroke="#efffc2" stroke-width="1.6" opacity="0.85"/><circle cx="504" cy="166" r="29.3" fill="url(#cag)" stroke="#a6a6a6" stroke-width="1.4"/><g transform="rotate(-42 504 166)"><path d="M484.8 160.8A19.8 19.8 0 0 1 523.2 160.8Z" fill="#efefef" stroke="#aaa" stroke-width="1"/><path d="M484.8 171.2A19.8 19.8 0 0 0 523.2 171.2Z" fill="#efefef" stroke="#aaa" stroke-width="1"/></g><path d="M579.5 143.5C586 139 594 138 599.5 141C604 144 606 147 611 146C615 145 617 143 619.5 142.5L623.5 168.5C620 170 617 172 612 172C606 172 603 166 597 166C591 166 587 168 583.5 170Z" fill="url(#flg)" stroke="#aaaaaa" stroke-width="1.4"/><path d="M572.5 141C573 138 578 137.5 579.3 140.5L587 193C586.5 196.5 581 197 579.5 194Z" fill="#d6d6d6" stroke="#a2a2a2" stroke-width="1.4"/><path d="M602.5 161H615.5C616.6 161 617.5 161.9 617.5 163V170.5H624.5C625.6 170.5 626.5 171.4 626.5 172.5V181.5C626.5 182.6 625.6 183.5 624.5 183.5H617.5V191.5C617.5 192.6 616.6 193.5 615.5 193.5H602.5C601.4 193.5 600.5 192.6 600.5 191.5V183.5H594.5C593.4 183.5 592.5 182.6 592.5 181.5V172.5C592.5 171.4 593.4 170.5 594.5 170.5H600.5V163C600.5 161.9 601.4 161 602.5 161Z" fill="url(#plg)" stroke="#8a8a8a" stroke-width="1.6"/><g transform="translate(654,134)" fill="#e4e4e4" stroke="#a4a4a4" stroke-width="1.800"><rect x="11" y="1" width="21" height="7"/><rect x="1" y="23" width="21" height="7"/><path d="M25.500 8.500L9.500 22.500M21 8.500L5.500 22.500" fill="none" stroke-width="1.800"/><path d="M29 9V16.500L25 17.500M4.500 22V15.500L9 14" fill="none" stroke-width="2.200"/></g><g transform="translate(654,182)" fill="#e9e9e9" stroke="#8e8e8e" stroke-width="2.2" stroke-linejoin="round"><path d="M1.5 7.5H22V29.5L20 30L18 27H7L5 30L1.5 29.5Z"/><path d="M4 10H9" stroke="#bbb"/><path d="M9.5 1.5H22V5.5H31.5V22.5L29.5 23.5L27 20.5H14.5L12 23.5L9.5 22.5Z"/><path d="M12 3.5H20" stroke="#d0d0d0" stroke-width="1.6"/><path d="M13 10H19M13 13.5H19M24 9.5H29M24 14H25.5M27.5 14H29" stroke="#b2b2b2" stroke-width="2" fill="none"/></g><g transform="translate(654,230)" fill="#e9e9e9" stroke="#8e8e8e" stroke-width="2.2" stroke-linejoin="round"><path d="M1.5 7.5H22V29.5L20 30L18 27H7L5 30L1.5 29.5Z"/><path d="M4 10H9" stroke="#bbb"/><path d="M9.5 1.5H22V5.5H31.5V22.5L29.5 23.5L27 20.5H14.5L12 23.5L9.5 22.5Z"/><path d="M12 3.5H20" stroke="#d0d0d0" stroke-width="1.6"/><path d="M13 10H19M13 13.5H19M24 9.5H29M24 14H25.5M27.5 14H29" stroke="#b2b2b2" stroke-width="2" fill="none"/></g><rect x="1001" y="137.5" width="38" height="12" rx="3" fill="url(#rfb)" stroke="#4f7dae" stroke-width="2"/><rect x="977" y="161.5" width="32" height="12" rx="3" fill="url(#rfb)" stroke="#4f7dae" stroke-width="2"/><rect x="1001" y="186" width="38" height="12" rx="3" fill="url(#rfb)" stroke="#4f7dae" stroke-width="2"/><polygon points="1004.5,162.5 1019.5,151.5 1012,151.5 1012,145 1032,145 1032,163.5 1025,163.5 1025,157 1014,168" fill="url(#rfo)" stroke="#e2460c" stroke-width="2" stroke-linejoin="round"/><polygon points="1004.5,173.500 1019.5,184.500 1012,184.500 1012,191 1032,191 1032,172.500 1025,172.500 1025,179 1014,168" fill="url(#rfo)" stroke="#e2460c" stroke-width="2" stroke-linejoin="round"/><circle cx="1008" cy="168" r="7.300" fill="#ffd9a0" stroke="#e85e1c" stroke-width="2"/><path d="M1009 168L1023 154M1009 168L1023 182" stroke="#ffe2b0" stroke-width="3.500"/><rect x="1094.5" y="138.5" width="59" height="59" rx="4" fill="url(#cbr)" stroke="#7a4210" stroke-width="1"/><rect x="1096.5" y="140.5" width="55" height="3" rx="1.5" fill="#f2b070" opacity="0.8"/><rect x="1098.5" y="144.5" width="51" height="49" fill="url(#cpg)" stroke="#4a3a30" stroke-width="0.8"/><rect x="1098.5" y="144.5" width="51" height="9.5" fill="url(#cbl)"/><rect x="1106" y="148" width="3" height="2" fill="#fff"/><rect x="1139" y="148" width="3" height="2" fill="#fff"/><text x="1124" y="186" text-anchor="middle" font-family="'DejaVu Sans Condensed','Liberation Sans',sans-serif" font-size="36" fill="#707070" stroke="#707070" stroke-width="0.7" textLength="37" lengthAdjust="spacingAndGlyphs">12</text><rect x="1233" y="159" width="58" height="18" rx="1.5" fill="url(#rmg)" stroke="#a8a8a8" stroke-width="2"/><path d="M2108.5 79H2135C2136.5 79 2137.5 80 2137.5 81.5V102.5C2137.5 104 2136.5 105 2135 105H2126L2121.7 109.5L2117.5 105H2108.5C2107 105 2106 104 2106 102.5V81.5C2106 80 2107 79 2108.5 79Z" fill="url(#ifg)" stroke="#d87e08" stroke-width="2"/><circle cx="2122" cy="85.5" r="2.6" fill="#fff" stroke="#c07820" stroke-width="1"/><path d="M2119 90.5H2124V97.5H2127V100.5H2116.5V97.5H2119.5V93H2119Z" fill="#fff" stroke="#c07820" stroke-width="1"/><circle cx="2197.5" cy="94" r="14.8" fill="url(#hlg)" stroke="#c41a24" stroke-width="2"/><text x="2197.5" y="103" text-anchor="middle" font-family="'DejaVu Sans Condensed','Liberation Sans',sans-serif" font-weight="bold" font-size="25" fill="#fff">?</text><g transform="translate(18,324)"><rect x="1" y="25" width="31" height="6.500" rx="2" fill="#5cc81e" stroke="#3f9a10" stroke-width="1"/><path d="M5 13H28V27H5Z" fill="#f4f6fc" stroke="#8a9cc8" stroke-width="1"/><rect x="20" y="2" width="6" height="8" fill="#e0703a" stroke="#b84a14" stroke-width="1"/><path d="M16 1L32 16L29 17.500L16 6L3.500 17.500L0.500 16Z" fill="#f08040" stroke="#c8501a" stroke-width="1"/><rect x="8.500" y="16" width="6" height="10.500" fill="#f6a050" stroke="#d06a20" stroke-width="1"/><rect x="18" y="16" width="8" height="8" fill="#3c8cf0" stroke="#2a60c0" stroke-width="1"/></g><g transform="translate(134,323)"><path d="M1.500 2.500C1.500 1.500 2.500 1 3.500 1H16C17 1 18 1.500 18 2.500V6H29.500C30.500 6 31.500 6.500 31.500 8V27.500L29 28.500C27 26 23 25 22.500 28.500H10.500C10 25 6 26 4 28.500L1.500 27.500Z" fill="#fbfbfd" stroke="#3c5c9c" stroke-width="2" stroke-linejoin="round"/><rect x="3" y="2.500" width="13.500" height="3.500" fill="#5a7cc4"/><text x="4.500" y="19" font-family="'DejaVu Sans Condensed','Liberation Sans',sans-serif" font-weight="bold" font-size="11" fill="#d8541c">A</text><path d="M18 10.500H28" stroke="#e8643a" stroke-width="2"/><path d="M18 14.500H21M23 14.500H28M18 18.500H21M23 18.500H28" stroke="#9aa6c0" stroke-width="1.600"/></g></svg>
</body></html>
